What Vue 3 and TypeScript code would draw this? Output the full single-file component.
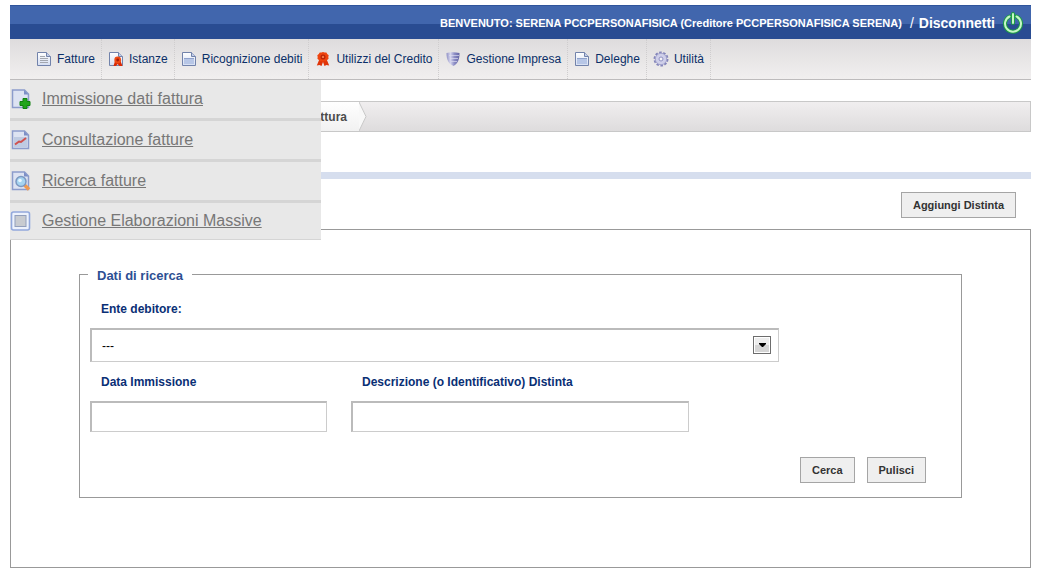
<script setup lang="ts">
import { ref } from 'vue'

type IconName = 'text' | 'award' | 'page' | 'ribbon' | 'shield' | 'gear'
type MenuIcon = 'add' | 'chart' | 'search' | 'window'

const navItems: { label: string; icon: IconName }[] = [
  { label: 'Fatture', icon: 'text' },
  { label: 'Istanze', icon: 'award' },
  { label: 'Ricognizione debiti', icon: 'page' },
  { label: 'Utilizzi del Credito', icon: 'ribbon' },
  { label: 'Gestione Impresa', icon: 'shield' },
  { label: 'Deleghe', icon: 'page' },
  { label: 'Utilità', icon: 'gear' },
]

const menuItems: { label: string; icon: MenuIcon }[] = [
  { label: 'Immissione dati fattura', icon: 'add' },
  { label: 'Consultazione fatture', icon: 'chart' },
  { label: 'Ricerca fatture', icon: 'search' },
  { label: 'Gestione Elaborazioni Massive', icon: 'window' },
]

const ente = ref('')
const dataImmissione = ref('')
const descrizione = ref('')

function pulisci(): void {
  ente.value = ''
  dataImmissione.value = ''
  descrizione.value = ''
}
</script>

<template>
  <div class="page">
    <svg class="defs" aria-hidden="true">
      <defs>
        <linearGradient id="paper" x1="0" y1="0" x2="0" y2="1">
          <stop offset="0" stop-color="#ffffff" />
          <stop offset="1" stop-color="#d5def2" />
        </linearGradient>
        <linearGradient id="steel" x1="0" y1="0" x2="1" y2="0">
          <stop offset="0" stop-color="#8f90c4" />
          <stop offset="0.3" stop-color="#d6d6ee" />
          <stop offset="0.6" stop-color="#8e8fc6" />
          <stop offset="1" stop-color="#6465a6" />
        </linearGradient>
      </defs>
    </svg>

    <header class="topbar">
      <span class="welcome">BENVENUTO: SERENA PCCPERSONAFISICA (Creditore PCCPERSONAFISICA SERENA)</span>
      <a class="logout" href="#">
        <span class="slash">/</span>
        <span>Disconnetti</span>
        <svg class="power" viewBox="0 0 22 22" aria-hidden="true">
          <g fill="none" stroke-linecap="round">
            <path d="M7.500 4.500a8 8 0 1 0 7 0M11 2v9" stroke="#1d9c46" stroke-width="4" />
            <path d="M7.500 4.500a8 8 0 1 0 7 0M11 2v9" stroke="#c4f7c6" stroke-width="2" />
          </g>
        </svg>
      </a>
    </header>

    <nav class="nav">
      <a v-for="item in navItems" :key="item.label" class="nav-item" href="#">
        <svg class="nav-icon" viewBox="0 0 14 14" aria-hidden="true">
          <template v-if="item.icon === 'text' || item.icon === 'award' || item.icon === 'page'">
            <path d="M.5.5h9l4 4v9H.5z" fill="url(#paper)" stroke="#7283ab" />
            <path d="M9.500.5v4h4" fill="#c3cee8" stroke="#7283ab" />
          </template>
          <path v-if="item.icon === 'text'" d="M3 4.500h5M3 6.500h8M3 8.500h8M3 10.500h8" stroke="#a3a7af" />
          <g v-if="item.icon === 'award'">
            <path d="M6 9l-1.500 5h2.500l1.500-2 2 2H13.500l-2-5z" fill="#d92a06" />
            <circle cx="8.700" cy="8" r="3.400" fill="#f04a14" />
            <circle cx="8.700" cy="8" r="1.400" fill="#a81d08" />
          </g>
          <g v-if="item.icon === 'page'">
            <path d="M2 7h10v5H2z" fill="#b7c6e6" />
            <path d="M2 6.500h10" stroke="#8fa2cc" />
          </g>
          <g v-if="item.icon === 'ribbon'">
            <path d="M3.500 7L.8 13.500l2.700-.5 2 1L7 10l1.500 4 2-1 2.700.5L10.500 7z" fill="#e03408" />
            <path d="M7 0l1.600.6 1.800-.1.800 1.600 1.500 1.100-.4 1.800.3 1.800-1.500 1.100-1 1.400-1.700-.1L7 9.800l-1.500-.6-1.700.1-.9-1.400-1.500-1.100.3-1.800-.4-1.800 1.500-1.100.9-1.600 1.800.1z" fill="#ee430d" />
            <circle cx="7" cy="4.900" r="2.500" fill="#b92308" />
            <circle cx="7" cy="4.900" r="1.200" fill="#f27842" />
          </g>
          <g v-if="item.icon === 'shield'">
            <path d="M.5 1Q4 0 7 .2T13.500 1C13.500 8 11.500 11.500 7.500 14 2.500 11.500.5 8 .5 1z" fill="url(#steel)" />
            <path d="M3 3.500h10M4 6.500h8M5 9.500h6" stroke="#dcdcf0" stroke-opacity=".7" />
          </g>
          <g v-if="item.icon === 'gear'">
            <circle cx="7" cy="7" r="6.600" fill="none" stroke="#8485ba" stroke-width="1.800" stroke-dasharray="2.600 1.547" />
            <circle cx="7" cy="7" r="5.700" fill="#cfcfe9" stroke="#9495c5" stroke-width=".8" />
            <circle cx="7" cy="7" r="2" fill="#f3f2f7" stroke="#9091c2" />
          </g>
        </svg>
        <span>{{ item.label }}</span>
      </a>

      <ul class="menu">
        <li v-for="item in menuItems" :key="item.label" class="menu-row">
          <svg class="menu-icon" viewBox="0 0 20 20" aria-hidden="true">
            <g v-if="item.icon !== 'window'">
              <path d="M2 1h12l4 4v13.500H2z" fill="#dde3f2" stroke="#8c9ccb" stroke-width="1.500" />
              <path d="M13.500 1v4.500H18z" fill="#7c8fc6" />
            </g>
            <path v-if="item.icon === 'add'" d="M12.500 9.500h4v3h3v4h-3v3h-4v-3h-3v-4h3z" fill="#21a51c" stroke="#118011" />
            <g v-if="item.icon === 'chart'">
              <path d="M3.500 7h13v10.500h-13z" fill="#bfcbe2" />
              <path d="M4.500 14.500l4-3 2 .5 5-4" fill="none" stroke="#d0504d" stroke-width="2" />
            </g>
            <g v-if="item.icon === 'search'">
              <path d="M14 14l4.500 4.500" stroke="#ee9950" stroke-width="3.500" />
              <circle cx="10.500" cy="10.500" r="5" fill="#a5d4f0" stroke="#7c98c1" stroke-width="1.500" />
              <circle cx="9.500" cy="9.500" r="1.800" fill="#e8f6ff" />
            </g>
            <g v-if="item.icon === 'window'">
              <rect x="1" y="1" width="18" height="18" rx="2" fill="#edf2fc" stroke="#92a8dc" stroke-width="1.600" />
              <rect x="4.500" y="4.500" width="11" height="11" fill="#c8cbd0" stroke="#929fbc" />
            </g>
          </svg>
          <a class="menu-link" href="#">{{ item.label }}</a>
        </li>
      </ul>
    </nav>

    <main>
      <div class="crumbs">
        <span class="crumb">fattura</span>
        <svg class="crumb-tip" viewBox="0 0 8 29" aria-hidden="true">
          <path d="M0 0l7 14.500L0 29z" fill="#f8f8f8" />
          <path d="M0 0l7 14.500L0 29" fill="none" stroke="#c8c8c8" />
        </svg>
      </div>
      <div class="rule"></div>
      <div class="toolbar">
        <button class="btn" type="button">Aggiungi Distinta</button>
      </div>

      <section class="panel">
        <form @submit.prevent>
          <fieldset class="box">
            <legend>Dati di ricerca</legend>
            <div class="row row-ente">
              <div class="field">
                <label for="ente">Ente debitore:</label>
                <div class="select-wrap">
                  <select id="ente" v-model="ente" class="control select">
                    <option value="">---</option>
                  </select>
                  <svg class="arrow" viewBox="0 0 18 18" aria-hidden="true">
                    <rect x=".5" y=".5" width="17" height="17" fill="#fff" stroke="#6d6d6d" />
                    <rect x="2" y="2" width="14" height="7" fill="#ededed" />
                    <rect x="2" y="9" width="14" height="7" fill="#d5d5d5" />
                    <path d="M6 7h7v1l-3 3H9L6 8z" fill="#000" />
                  </svg>
                </div>
              </div>
            </div>
            <div class="row row-text">
              <div class="field">
                <label for="data">Data Immissione</label>
                <input id="data" v-model="dataImmissione" class="control" type="text" />
              </div>
              <div class="field">
                <label for="descrizione">Descrizione (o Identificativo) Distinta</label>
                <input id="descrizione" v-model="descrizione" class="control" type="text" />
              </div>
            </div>
            <div class="actions">
              <button class="btn" type="submit">Cerca</button>
              <button class="btn" type="button" @click="pulisci">Pulisci</button>
            </div>
          </fieldset>
        </form>
      </section>
    </main>
  </div>
</template>

<style>
body {
  background: #fff;
}
</style>

<style scoped>
.page {
  padding: 5px 9px 13px 10px;
  font-family: "Liberation Sans", Arial, sans-serif;
  font-size: 12px;
  color: #333;
}

.page *,
.page {
  box-sizing: border-box;
}

.defs {
  position: absolute;
  width: 0;
  height: 0;
}

.topbar {
  display: flex;
  align-items: center;
  justify-content: flex-end;
  gap: 8px;
  height: 34px;
  padding-right: 7px;
  border-top: 1px solid #2f549b;
  background: linear-gradient(#4166ad 0 18px, #294c92 18px);
  color: #fff;
  font-weight: bold;
}

.welcome {
  font-size: 11px;
}

.logout {
  display: flex;
  align-items: center;
  gap: 5px;
  color: #fff;
  font-size: 14px;
  text-decoration: none;
}

.slash {
  font-weight: normal;
}

.power {
  width: 22px;
  height: 22px;
  margin-left: 2px;
}

.nav {
  position: relative;
  display: flex;
  height: 41px;
  padding-left: 20px;
  border-bottom: 1px solid #bdbbbc;
  background: linear-gradient(#dedcdd, #f1efef);
}

.nav-item {
  display: flex;
  align-items: center;
  gap: 6px;
  padding: 0 6px 0 7px;
  border-right: 1px dotted #cfcdce;
  color: #0b2f68;
  text-decoration: none;
  white-space: nowrap;
}

.nav-icon {
  width: 14px;
  height: 14px;
  overflow: visible;
}

.menu {
  position: absolute;
  top: 41px;
  left: 0;
  z-index: 1;
  width: 311px;
  margin: 0;
  padding: 0;
  list-style: none;
  background: #e8e8e8;
}

.menu-row {
  display: flex;
  align-items: center;
  gap: 11px;
  height: 41px;
  border-bottom: 3px solid #d5d5d5;
}

.menu-row:last-child {
  height: 37px;
  border-bottom-width: 1px;
}

.menu-icon {
  width: 21px;
  height: 20px;
}

.menu-link {
  color: #777;
  font-size: 16px;
}

.crumbs {
  display: flex;
  height: 31px;
  margin-top: 21px;
  border: 1px solid #c8c8c8;
  background: linear-gradient(#f0eeef, #dedcdd);
}

.crumb {
  display: flex;
  align-items: center;
  justify-content: flex-end;
  width: 348px;
  padding-right: 12px;
  background: linear-gradient(#fff, #f1f1f1);
  color: #4c4c4c;
  font-weight: bold;
}

.crumb-tip {
  width: 8px;
  height: 29px;
}

.rule {
  height: 7px;
  margin-top: 40px;
  background: #d6deee;
}

.toolbar {
  display: flex;
  justify-content: flex-end;
  padding: 13px 15px 11px;
}

.btn {
  height: 26px;
  padding: 0 11px;
  border: 1px solid #a5a5a5;
  border-radius: 0;
  background: #efefef;
  color: #333;
  font-family: inherit;
  font-size: 11px;
  font-weight: bold;
}

.panel {
  padding: 35px 68px 69px;
  border: 1px solid #999;
}

.box {
  min-width: 0;
  margin: 0;
  padding: 17px 10px 14px;
  border: 1px solid #999;
}

legend {
  margin-left: -2px;
  padding: 3px 9px 0;
  color: #2d4f93;
  font-size: 13px;
  font-weight: bold;
  line-height: 16px;
}

.row {
  display: grid;
  column-gap: 24px;
}

.row-ente {
  grid-template-columns: 4fr 1fr;
  column-gap: 0;
  margin-bottom: 12px;
}

.row-text {
  grid-template-columns: 237fr 338fr 238fr;
}

.field label {
  display: block;
  margin: 0 0 11px 11px;
  color: #0a2f75;
  font-weight: bold;
  line-height: 16px;
}

.control {
  display: block;
  width: 100%;
  height: 31px;
  padding: 0 10px;
  border: 1px solid #ccc;
  border-top: 2px solid #bbb;
  border-left: 2px solid #bbb;
  border-radius: 0;
  background: #fff;
  color: #000;
  font-family: inherit;
  font-size: 12px;
}

.select-wrap {
  position: relative;
}

.select {
  height: 34px;
  appearance: none;
}

.arrow {
  position: absolute;
  top: 8px;
  right: 8px;
  width: 18px;
  height: 18px;
  pointer-events: none;
}

.actions {
  display: flex;
  justify-content: flex-end;
  gap: 12px;
  margin-top: 25px;
  padding-right: 25px;
}
</style>
